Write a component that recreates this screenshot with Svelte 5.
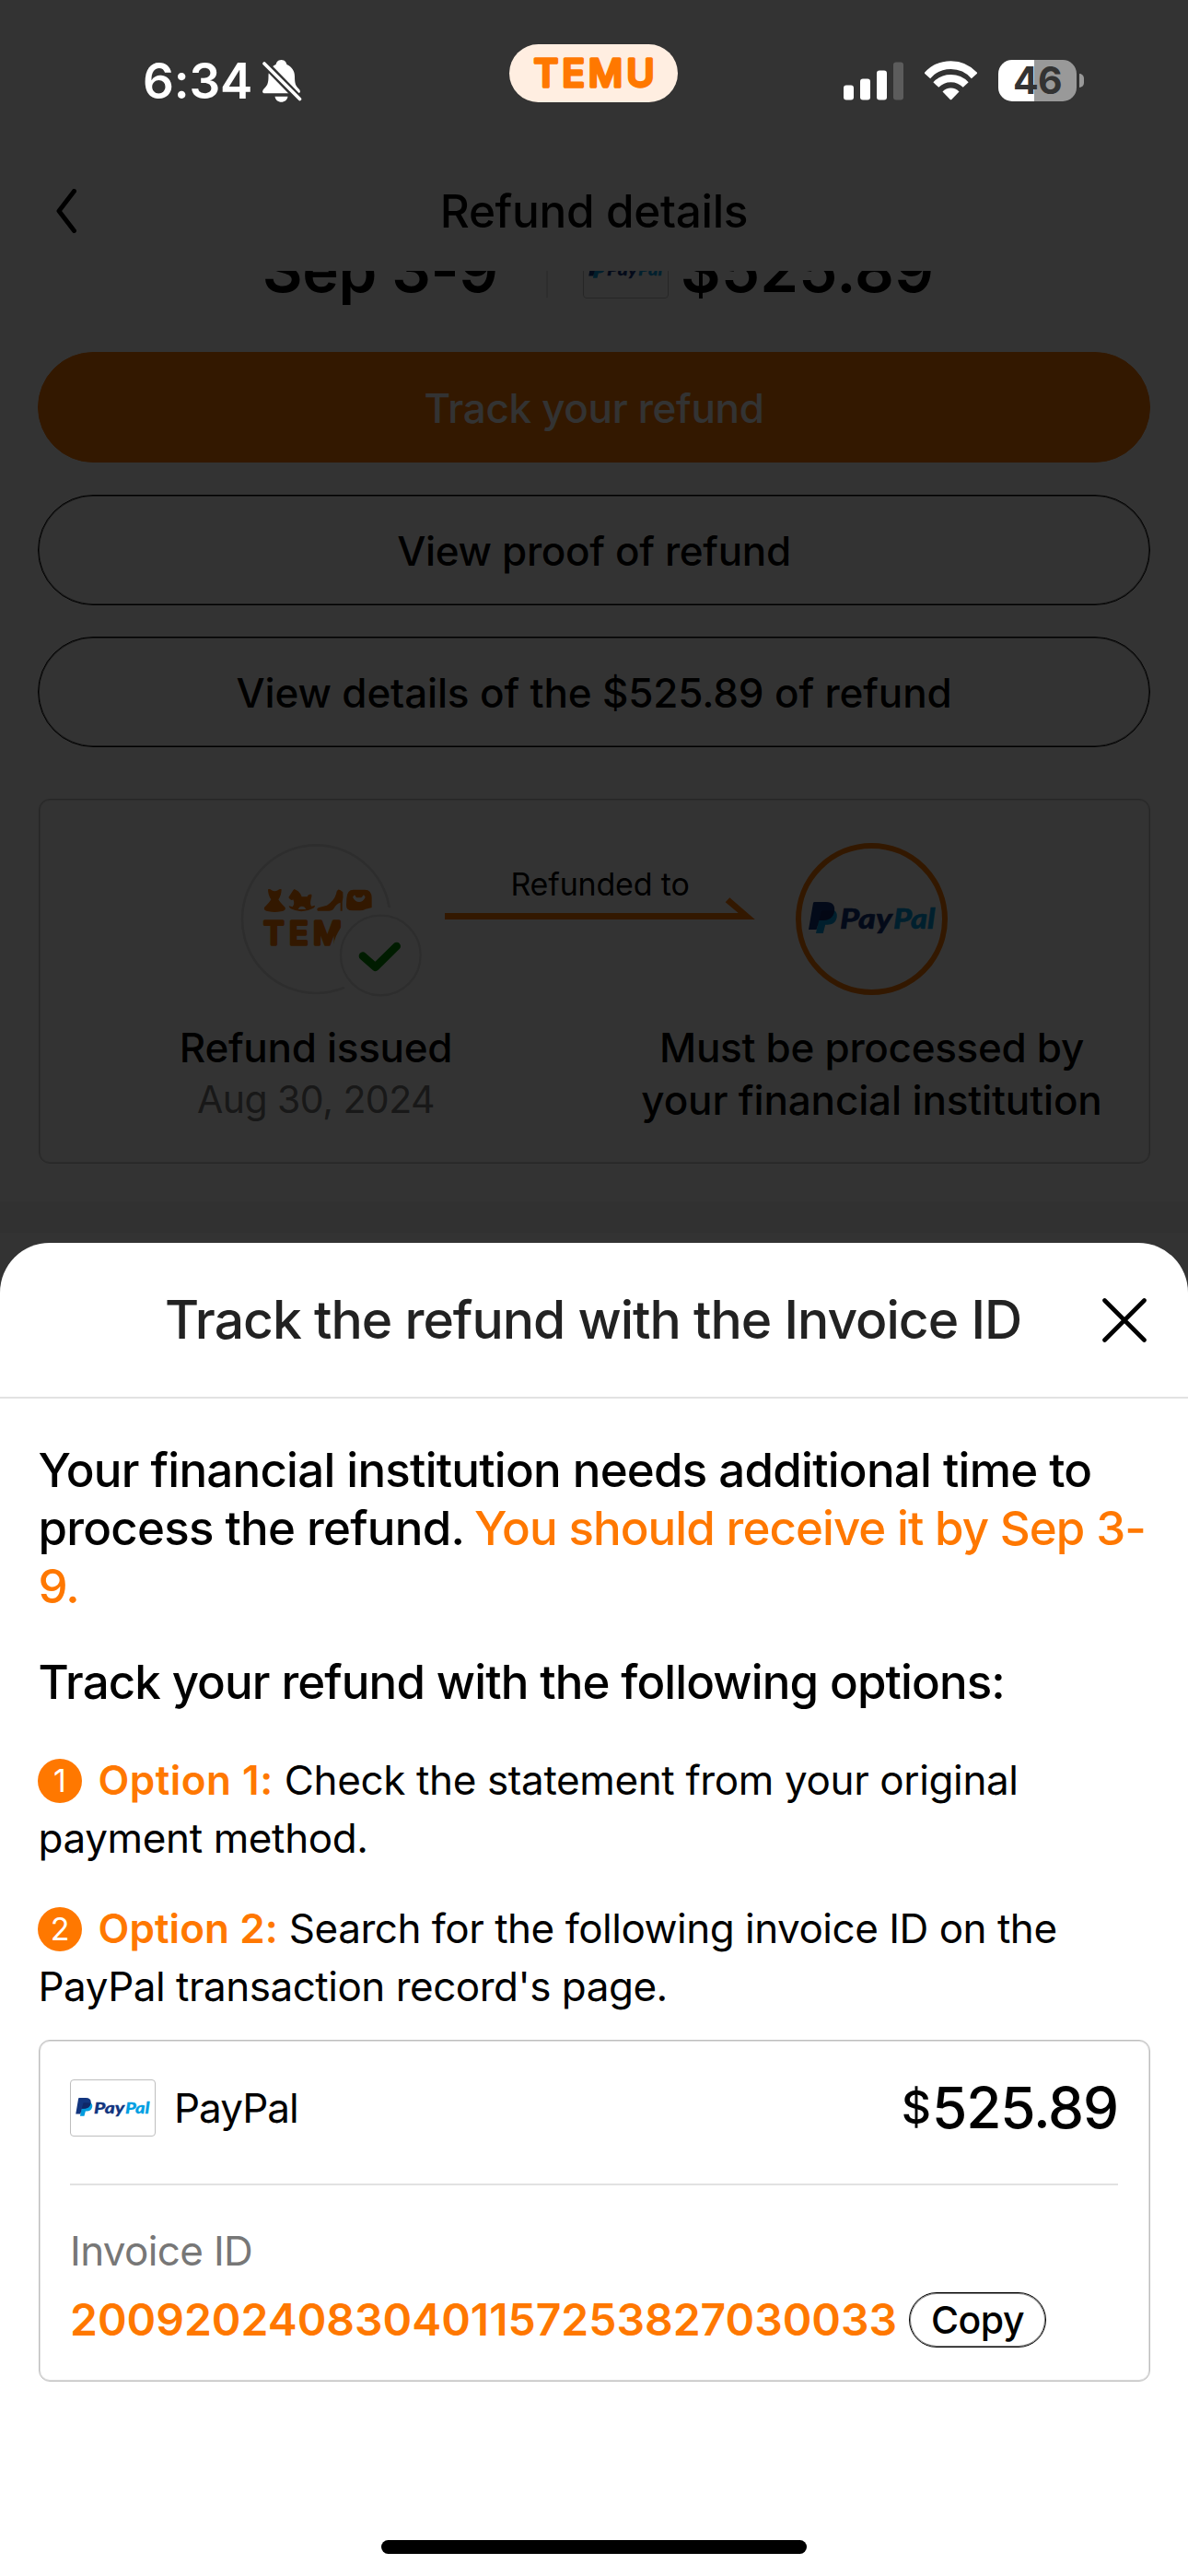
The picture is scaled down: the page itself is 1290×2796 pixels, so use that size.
<script>
  const actions = [
    { label: 'Track your refund', kind: 'primary' },
    { label: 'View proof of refund', kind: 'outline' },
    { label: 'View details of the $525.89 of refund', kind: 'wide' }
  ];

  const options = [
    {
      n: 1,
      lines: ['Check the statement from your original', 'payment method.']
    },
    {
      n: 2,
      lines: ['Search for the following invoice ID on the', "PayPal transaction record's page."]
    }
  ];
</script>

{#snippet paypalLogo()}
  <svg class="paypal-logo" viewBox="0 0 138 36" aria-label="PayPal">
    <path fill="#009cde" d="M26 8C30.500 10 31.500 13.500 30.500 17.500C29.200 22.600 25.800 24.700 20.500 24.700H18.200L15.800 34H8L12 14Z" />
    <path fill="#12357f" d="M5 1Q5.300 0 6.500 0H19C26 0 29.200 4 28 10C26.800 17 22 20 15 20H11.500L8.600 30H0Z" />
    <path fill="#0f2767" d="M13.500 11Q14 9.400 15.500 9.200L28 9.300C27 17 22 20 15 20H11.300Z" />
    <text class="mark" x="34" y="29.300" fill="#12357f" stroke="#12357f" textLength="57" lengthAdjust="spacingAndGlyphs">Pay</text>
    <text class="mark" x="92" y="29.300" fill="#009fe3" stroke="#009fe3" textLength="45.500" lengthAdjust="spacingAndGlyphs">Pal</text>
  </svg>
{/snippet}

<div class="screen">
  <div class="page">
    <header class="nav">
      <svg class="back" viewBox="0 0 22 48" width="22" height="48"><path d="M19.500 2.500L3 24L19.500 45.500" /></svg>
      <h1>Refund details</h1>
    </header>

    <div class="summary">
      <div class="summary-row">
        <span class="date">Sep 3-9</span>
        <span class="rule"></span>
        <span class="brand-box">{@render paypalLogo()}</span>
        <span class="total">$525.89</span>
      </div>
    </div>

    <div class="actions">
      {#each actions as a}
        <button class={a.kind}>{a.label}</button>
      {/each}
    </div>

    <section class="flow-card">
      <svg class="temu-badge" viewBox="0 0 630 555" width="210" height="185">
        <circle cx="265" cy="278" r="241" fill="#fff" stroke="#dedede" stroke-width="8" />
        <g fill="#ff7800">
          <path d="M108 181Q114 178 120 184Q130 190 140 184Q147 178 152 181Q152 200 142 214Q146 222 164 240Q168 250 150 253Q130 257 110 253Q92 250 96 240Q114 222 118 214Q108 200 108 181Z" />
          <path d="M175 207L190 184L194 180L206 187Q214 194 218 205H236Q238 197 244 197H250Q252 205 248 212Q244 230 250 236L261 233Q262 238 256 242Q218 262 182 244Q176 240 176 235L188 238Q196 228 190 214Q182 220 175 207ZM206 246H232Q228 236 218 236Q210 236 206 246Z" fill-rule="evenodd" />
          <path d="M336 182Q342 180 352 190Q354 206 350 222V251H344V224Q332 226 322 244Q318 251 306 251H270Q264 244 274 240L300 233Q324 218 330 196Q331 186 336 182Z" />
          <path d="M364 210Q366 182 386 182H424Q445 182 446 208V250H382Q362 250 363 232ZM384 206Q392 222 405 222Q418 222 425 206L420 199L412 208H396L390 199Z" fill-rule="evenodd" />
        </g>
        <text class="temu" x="94" y="360" stroke-width="11" textLength="346" font-size="102">TEMU</text>
        <circle cx="475" cy="396" r="158" fill="#fff" />
        <circle cx="475" cy="396" r="130" fill="#fff" stroke="#dedede" stroke-width="7" />
        <path d="M417 398L458 434L527 366" fill="none" stroke="#008c00" stroke-width="26" stroke-linecap="round" stroke-linejoin="round" />
      </svg>

      <div class="arrow">
        <span>Refunded to</span>
        <svg viewBox="0 0 337 26" width="337" height="26"><path fill="#ff7800" d="M0 19H318.700L304.700 7.300L309.300 2.300L336.800 26H0Z" /></svg>
      </div>

      <div class="paypal-badge">{@render paypalLogo()}</div>

      <div class="step left">
        <strong>Refund issued</strong>
        <span>Aug 30, 2024</span>
      </div>
      <div class="step right">
        <strong>Must be processed by</strong>
        <strong class="second">your financial institution</strong>
      </div>
    </section>

    <div class="band"></div>
  </div>

  <div class="scrim"></div>

  <div class="status">
    <span class="time">6:34</span>
    <svg class="bell" viewBox="0 0 43 46" width="43" height="46">
      <path fill="#fff" d="M20.500 0C16.500 0 15 3 14.600 5C9 7.500 6.500 12 6.500 18C6.500 26 5 28 1.500 31.500C-1 34.500 0 36.300 2.500 36.300H38.500C41 36.300 42 34 39.500 31.500C36 28 35 26 35 18C35 12 32 7.500 26.400 5C26 3 24.500 0 20.500 0ZM13.500 39.700H27.500C27 43.500 24 45.700 20.500 45.700C17 45.700 14 43.500 13.500 39.700Z" />
      <path stroke="#333" stroke-width="8.400" d="M-1 0.500L43 45.500" />
      <path stroke="#fff" stroke-width="3.600" stroke-linecap="round" d="M2 4L40.500 42.500" />
    </svg>
    <div class="pill">
      <svg viewBox="0 0 183 63" width="183" height="63">
        <text class="temu" x="26.500" y="46.200" stroke-width="3.400" textLength="131" font-size="41">TEMU</text>
      </svg>
    </div>
    <div class="system">
      <svg viewBox="0 0 65 42" width="65" height="42" fill="#fff">
        <rect x="0" y="25.500" width="11" height="16" rx="3" />
        <rect x="18" y="18.500" width="11" height="23" rx="3" />
        <rect x="36" y="9.500" width="11" height="32" rx="3" />
        <rect x="54" y="0.500" width="11" height="41" rx="3" fill="#5c5c5c" />
      </svg>
      <svg viewBox="0 0 57 42.500" width="57" height="42.500" fill="none" stroke="#fff">
        <path stroke-width="8.800" d="M2.800 16.300A34 34 0 0 1 54.200 16.300" />
        <path stroke-width="8.200" d="M12.300 26A22.500 22.500 0 0 1 44.700 26" />
        <path fill="#fff" stroke="none" d="M19.500 33.500C24 28 33 28 37.500 33.500L29.300 42Q28.500 42.600 27.700 42Z" />
      </svg>
      <div class="battery">
        <div class="cell">46</div>
        <i></i>
      </div>
    </div>
  </div>

  <div class="sheet">
    <header>
      <h2>Track the refund with the Invoice ID</h2>
      <svg class="close" viewBox="0 0 48 48" width="48" height="48"><path d="M2.500 2.500L45.500 45.500M45.500 2.500L2.500 45.500" /></svg>
    </header>

    <div class="body">
      <p class="lead">
        Your financial institution needs additional time to<br />
        process the refund. <em>You should receive it by Sep 3-<br />9.</em>
      </p>
      <p class="lead sub">Track your refund with the following options:</p>

      {#each options as o}
        <p class="option o{o.n}">
          <i>{o.n}</i><b>Option {o.n}:</b> {o.lines[0]}<br />{o.lines[1]}
        </p>
      {/each}

      <div class="invoice">
        <div class="method">
          <span class="brand-box">{@render paypalLogo()}</span>
          <span class="name">PayPal</span>
          <span class="amount"><small>$</small>525.89</span>
        </div>
        <div class="label">Invoice ID</div>
        <div class="number">
          <span>200920240830401157253827030033</span>
          <button>Copy</button>
        </div>
      </div>
    </div>

    <div class="home"></div>
  </div>
</div>

<style>
  :global(body) {
    background: #fff;
  }

  .screen {
    position: relative;
    width: 1290px;
    height: 2796px;
    overflow: hidden;
    background: #fff;
    color: #000;
    font-family: Inter, "Liberation Sans", sans-serif;
    white-space: nowrap;
  }

  h1, h2, p {
    margin: 0;
    font-weight: 500;
  }

  button {
    box-sizing: border-box;
    padding: 0;
    background: none;
    border: 1px solid #000;
    border-radius: 60px;
    box-shadow: inset 0 0 0 1px rgba(0, 0, 0, 0.5);
    color: #000;
    font-family: inherit;
    font-weight: 500;
  }

  svg {
    display: block;
    flex: none;
  }

  .page {
    display: flex;
    flex-direction: column;
    height: 100%;
  }

  .nav {
    display: grid;
    grid-template-columns: 61px 22px 1fr 83px;
    align-items: center;
    box-sizing: border-box;
    height: 294px;
    padding-top: 164px;
  }

  .back {
    grid-column: 2;
    fill: none;
    stroke: #000;
    stroke-width: 5;
    stroke-linecap: round;
    stroke-linejoin: round;
  }

  h1 {
    font-size: 49.5px;
    letter-spacing: -0.34px;
    text-align: center;
  }

  .summary {
    height: 88px;
    overflow: hidden;
  }

  .summary-row {
    display: flex;
    align-items: center;
    height: 61px;
    margin-top: -32px;
    padding-left: 285px;
    font-size: 67px;
    font-weight: 600;
    line-height: 61px;
  }

  .date {
    width: 308px;
    letter-spacing: -0.4px;
  }

  .rule {
    width: 2px;
    height: 61px;
    margin-right: 38px;
    background: #e2e2e2;
  }

  .total {
    margin-left: 13px;
    letter-spacing: 0.3px;
  }

  .brand-box {
    display: flex;
    align-items: center;
    justify-content: center;
    box-sizing: border-box;
    width: 93px;
    height: 62px;
    border: 1px solid #bebebe;
    border-radius: 4px;
  }

  .brand-box :global(.paypal-logo) {
    width: 81px;
    height: 21px;
  }

  .paypal-logo {
    overflow: visible;
  }

  .mark {
    stroke-width: 0.5;
    font: italic 900 29.500px Lato, sans-serif;
  }

  .temu {
    fill: #ff7800;
    stroke: #ff7800;
    stroke-linejoin: round;
    font-family: Inter, sans-serif;
    font-weight: 500;
  }

  .actions {
    display: flex;
    flex-direction: column;
    gap: 34.700px;
    padding: 0 41px;
  }

  .actions button {
    height: 120px;
    padding-top: 2px;
    font-size: 44px;
    letter-spacing: -0.34px;
  }

  .actions .primary {
    background: #ff7800;
    border-color: #ff7800;
    box-shadow: none;
    color: #fff;
  }

  .actions .wide {
    letter-spacing: -0.15px;
  }

  .flow-card {
    display: grid;
    grid-template-columns: 601px 1fr;
    grid-template-rows: 185px auto;
    box-sizing: border-box;
    height: 396px;
    margin: 55.600px 41.500px 0;
    padding-top: 37px;
    border: 1px solid #bebebe;
    border-radius: 12px;
    box-shadow: inset 0 0 0 1px rgba(190, 190, 190, 0.5);
  }

  .temu-badge {
    grid-area: 1 / 1;
    margin-left: 212px;
  }

  .arrow {
    grid-area: 1 / 1 / 2 / 3;
    width: 337px;
    margin: 42px 0 0 440.500px;
    text-align: center;
    font-size: 34px;
    line-height: 25px;
    letter-spacing: -0.18px;
  }

  .arrow span {
    display: block;
  }

  .paypal-badge {
    display: flex;
    align-items: center;
    justify-content: center;
    grid-area: 1 / 2;
    justify-self: center;
    box-sizing: border-box;
    width: 165px;
    height: 165px;
    margin: 10px 0 0 2px;
    border: 6px solid #ff7800;
    border-radius: 50%;
  }

  .paypal-badge :global(.paypal-logo) {
    width: 138px;
    height: 36px;
  }

  .step {
    padding-top: 19.500px;
    text-align: center;
    font-size: 44px;
    line-height: 57px;
    letter-spacing: -0.3px;
  }

  .right {
    padding-left: 2px;
  }

  .step strong,
  .step span {
    display: block;
    font-weight: 500;
  }

  .step .second {
    letter-spacing: -0.15px;
  }

  .step span {
    color: #777;
    font-size: 41px;
    font-weight: 400;
    line-height: 54px;
    letter-spacing: -0.54px;
  }

  .band {
    height: 34px;
    margin-top: 41px;
    background: #f5f5f5;
  }

  .scrim {
    position: absolute;
    inset: 0;
    background: rgba(0, 0, 0, 0.8);
  }

  .status {
    position: absolute;
    inset: 0 0 auto;
    display: flex;
    align-items: center;
    box-sizing: border-box;
    height: 175px;
    padding: 0 113px 0 155px;
    color: #fff;
  }

  .time {
    width: 130px;
    font-size: 53px;
    font-weight: 600;
    letter-spacing: -0.17px;
  }

  .pill {
    position: absolute;
    top: 48px;
    left: 553px;
    border-radius: 32px;
    background: #ffeee1;
  }

  .system {
    display: flex;
    align-items: center;
    gap: 23px;
    margin-left: auto;
  }

  .battery {
    display: flex;
    align-items: center;
    gap: 3px;
  }

  .cell {
    width: 85px;
    height: 45px;
    border-radius: 15px;
    background: linear-gradient(90deg, #fff 39px, #999 39px);
    color: #333;
    font-size: 41px;
    font-weight: 700;
    line-height: 45px;
    letter-spacing: -0.8px;
    text-align: center;
  }

  .battery i {
    width: 5px;
    height: 15px;
    border-radius: 0 5px 5px 0;
    background: #999;
  }

  .sheet {
    position: absolute;
    inset: 1349px 0 0;
    display: flex;
    flex-direction: column;
    box-sizing: border-box;
    padding-bottom: 24px;
    border-radius: 54px 54px 0 0;
    background: #fff;
  }

  .sheet header {
    display: grid;
    grid-template-columns: 91px 1fr 48px 45px;
    align-items: center;
    box-sizing: border-box;
    height: 169px;
    border-bottom: 2px solid #e2e2e2;
  }

  h2 {
    grid-column: 2;
    color: #222;
    font-size: 57px;
    letter-spacing: -1px;
    text-align: center;
  }

  .close {
    grid-column: 3;
    fill: none;
    stroke: #000;
    stroke-width: 4.600;
    stroke-linecap: round;
  }

  .body {
    padding: 46px 41.500px 0;
  }

  .lead {
    font-size: 51px;
    line-height: 63px;
    letter-spacing: -0.76px;
  }

  .lead em {
    margin-left: -1.500px;
    color: #ff7800;
    font-style: normal;
    letter-spacing: -0.92px;
  }

  .sub {
    margin-top: 40.700px;
    letter-spacing: -0.88px;
  }

  .option {
    margin-top: 44.500px;
    font-size: 44px;
    font-weight: 400;
    line-height: 63px;
    letter-spacing: -0.37px;
  }

  .o2 {
    margin-top: 35.300px;
    letter-spacing: -0.49px;
  }

  .option i {
    display: inline-block;
    width: 48px;
    height: 48px;
    margin: 0 17.500px 0 -0.500px;
    border-radius: 50%;
    background: #ff7800;
    color: #fff;
    font-size: 34px;
    font-style: normal;
    line-height: 48px;
    letter-spacing: 0;
    text-align: center;
    vertical-align: 3px;
  }

  .option b {
    color: #ff7800;
    font-weight: 600;
    letter-spacing: 0.5px;
  }

  .o2 b {
    letter-spacing: 0.1px;
  }

  .invoice {
    box-sizing: border-box;
    height: 371px;
    margin-top: 25.500px;
    padding: 0 33.500px;
    border: 1px solid #bebebe;
    border-radius: 12px;
    box-shadow: inset 0 0 0 1px rgba(190, 190, 190, 0.5);
  }

  .method {
    display: flex;
    align-items: center;
    box-sizing: border-box;
    height: 157px;
    padding-bottom: 9px;
    border-bottom: 2px solid #e2e2e2;
  }

  .name {
    margin-left: 20px;
    font-size: 44px;
    letter-spacing: -0.98px;
  }

  .amount {
    margin-left: auto;
    font-size: 62px;
    font-weight: 500;
    line-height: 62px;
    letter-spacing: -1.1px;
  }

  .amount small {
    margin-right: 2px;
    font-size: 50px;
    line-height: 50px;
    vertical-align: 5px;
  }

  .label {
    margin-top: 41.300px;
    color: #777;
    font-size: 44px;
    line-height: 60px;
    letter-spacing: -0.67px;
  }

  .number {
    display: flex;
    margin-top: 15.200px;
    color: #ff7800;
    font-size: 48px;
    font-weight: 600;
    line-height: 60px;
  }

  .number span {
    width: 911px;
  }

  .number button {
    width: 149px;
    height: 60px;
    font-size: 41px;
    letter-spacing: -0.47px;
  }

  .home {
    width: 462px;
    height: 15px;
    margin: auto auto 0;
    border-radius: 8px;
    background: #000;
  }
</style>
